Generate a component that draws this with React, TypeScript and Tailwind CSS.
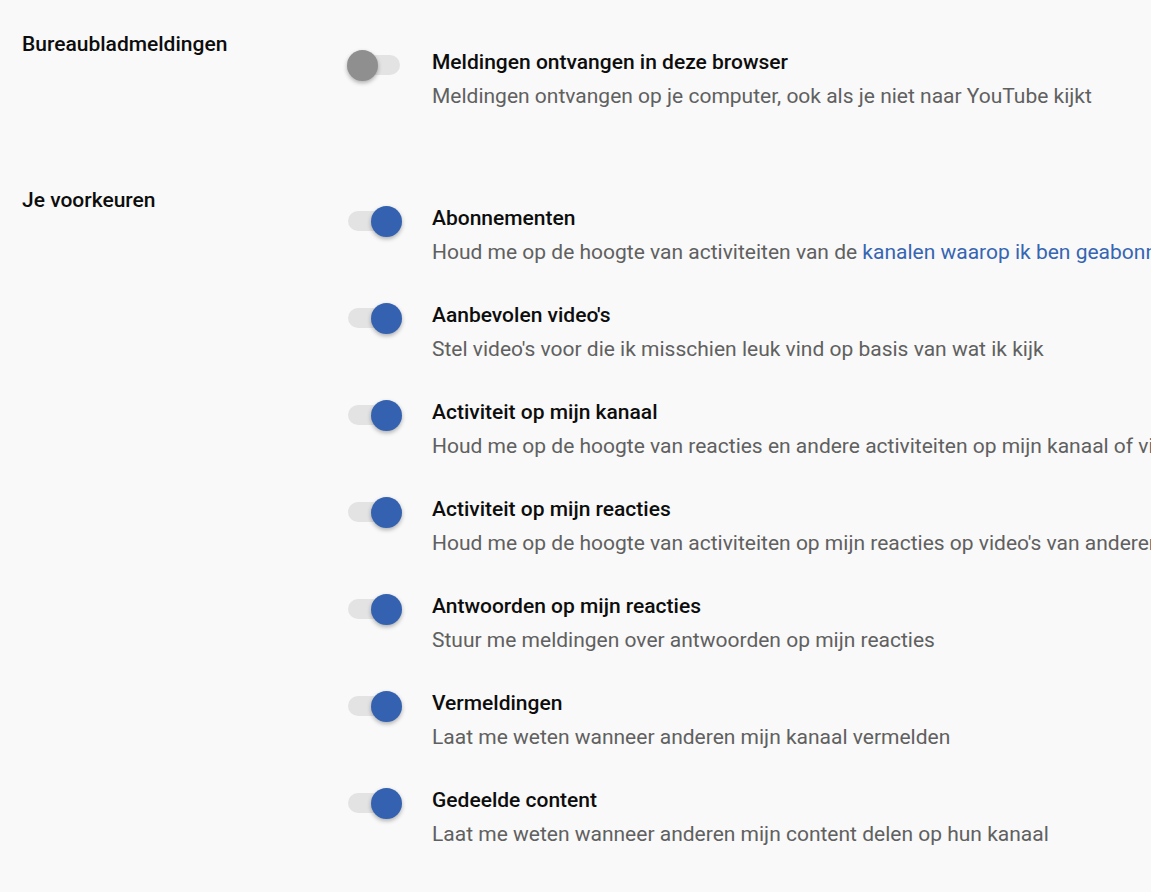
import React from "react"

type Pref = {
  title: string
  desc: React.ReactNode
  on: boolean
}

const desktop: Pref[] = [
  {
    title: "Meldingen ontvangen in deze browser",
    desc: "Meldingen ontvangen op je computer, ook als je niet naar YouTube kijkt",
    on: false,
  },
]

const prefs: Pref[] = [
  {
    title: "Abonnementen",
    desc: (
      <>
        Houd me op de hoogte van activiteiten van de{" "}
        <span className="text-[#3665b3]">kanalen waarop ik ben geabonneerd</span>
      </>
    ),
    on: true,
  },
  {
    title: "Aanbevolen video's",
    desc: "Stel video's voor die ik misschien leuk vind op basis van wat ik kijk",
    on: true,
  },
  {
    title: "Activiteit op mijn kanaal",
    desc: "Houd me op de hoogte van reacties en andere activiteiten op mijn kanaal of video's",
    on: true,
  },
  {
    title: "Activiteit op mijn reacties",
    desc: "Houd me op de hoogte van activiteiten op mijn reacties op video's van anderen",
    on: true,
  },
  {
    title: "Antwoorden op mijn reacties",
    desc: "Stuur me meldingen over antwoorden op mijn reacties",
    on: true,
  },
  {
    title: "Vermeldingen",
    desc: "Laat me weten wanneer anderen mijn kanaal vermelden",
    on: true,
  },
  {
    title: "Gedeelde content",
    desc: "Laat me weten wanneer anderen mijn content delen op hun kanaal",
    on: true,
  },
]

function Toggle({ on }: { on: boolean }) {
  return (
    <div className="relative h-[31px] w-[56px] shrink-0">
      <div className="absolute left-[1px] top-[5px] h-[20px] w-[52px] rounded-full bg-[#e3e3e3]" />
      <div
        className={
          on
            ? "absolute left-[24px] top-0 h-[31px] w-[31px] rounded-full bg-[#3462b0] shadow-[0_2px_4px_rgba(0,0,0,0.3)]"
            : "absolute left-0 top-0 h-[31px] w-[31px] rounded-full bg-[#8f8f8f] shadow-[0_2px_4px_rgba(0,0,0,0.3)]"
        }
      />
    </div>
  )
}

function Row({ pref }: { pref: Pref }) {
  return (
    <div className="flex h-[97px] items-start">
      <div className="flex w-[85px] shrink-0">
        <Toggle on={pref.on} />
      </div>
      <div className="flex flex-col whitespace-nowrap">
        <div className="text-[21px] font-medium leading-[25px] text-[#0d0d0d]">{pref.title}</div>
        <div className="mt-[9px] text-[21px] leading-[25px] text-[#606060]">{pref.desc}</div>
      </div>
    </div>
  )
}

function Section({ label, items }: { label: string; items: Pref[] }) {
  return (
    <div className="flex">
      <div className="w-[347px] shrink-0 pl-[22px] text-[21px] font-medium leading-[25px] text-[#0d0d0d]">
        {label}
      </div>
      <div className="flex flex-col pt-[18px]">
        {items.map((p, i) => (
          <Row key={i} pref={p} />
        ))}
      </div>
    </div>
  )
}

export default function App() {
  return (
    <div
      className="h-[892px] w-[1151px] overflow-hidden bg-[#f9f9f9] pt-[32px]"
      style={{ fontFamily: "Roboto, 'Noto Sans', sans-serif" }}
    >
      <Section label="Bureaubladmeldingen" items={desktop} />
      <div className="h-[41px]" />
      <Section label="Je voorkeuren" items={prefs} />
    </div>
  )
}
